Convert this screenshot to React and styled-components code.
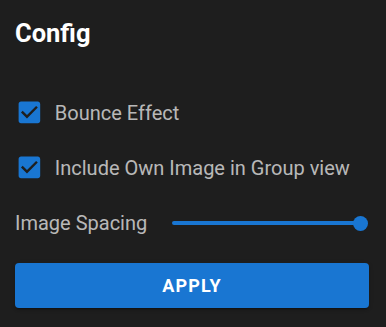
import React from "react";
import styled, { createGlobalStyle } from "styled-components";

const Global = createGlobalStyle`
  html, body { margin: 0; padding: 0; background: #1e1e1e; }
  body { font-family: Roboto, "Liberation Sans", sans-serif; }
`;

const Panel = styled.div`
  width: 386px;
  height: 327px;
  box-sizing: border-box;
  padding: 17px 17px 0 15px;
  background: #1e1e1e;
  display: flex;
  flex-direction: column;
`;

const Title = styled.h2`
  margin: 0 0 36px 0;
  height: 32px;
  line-height: 32px;
  font-size: 25.5px;
  font-weight: 700;
  color: #ffffff;
`;

const Row = styled.label`
  display: flex;
  align-items: center;
  height: ${(p) => p.$h || 55}px;
  gap: ${(p) => p.$gap || 11}px;
`;

const Label = styled.span`
  font-size: 20px;
  line-height: 24px;
  color: rgba(255, 255, 255, 0.7);
  white-space: nowrap;
`;

const Box = styled.svg`
  width: 28.8px;
  height: 28.8px;
  flex: none;
  fill: #1976d2;
`;

const SliderWrap = styled.div`
  position: relative;
  width: 188px;
  height: 16px;
  margin-left: auto;
  margin-right: 9px;
`;

const Track = styled.div`
  position: absolute;
  left: 0;
  right: 0;
  top: 6px;
  height: 4px;
  border-radius: 2px;
  background: #1976d2;
`;

const Thumb = styled.div`
  position: absolute;
  top: 0.5px;
  width: 15px;
  height: 15px;
  margin-left: -7.5px;
  border-radius: 50%;
  background: #1976d2;
`;

const Button = styled.button`
  margin-top: 12px;
  height: 45px;
  width: 100%;
  border: none;
  border-radius: 4px;
  background: #1976d2;
  color: #fff;
  font-family: Roboto, "Liberation Sans", sans-serif;
  font-size: 18px;
  font-weight: 700;
  letter-spacing: 1.1px;
  text-transform: uppercase;
  box-shadow: 0 3px 1px -2px rgba(0,0,0,0.2), 0 2px 2px 0 rgba(0,0,0,0.14), 0 1px 5px 0 rgba(0,0,0,0.12);
  cursor: pointer;
`;

const CheckIcon = () => (
  <Box viewBox="0 0 24 24">
    <path d="M19 3H5c-1.11 0-2 .9-2 2v14c0 1.1.89 2 2 2h14c1.11 0 2-.9 2-2V5c0-1.1-.89-2-2-2zm-9 14l-5-5 1.41-1.41L10 14.17l7.59-7.59L19 8l-9 9z" />
  </Box>
);

export default function App() {
  const value = 100;
  return (
    <>
      <Global />
      <Panel>
        <Title>Config</Title>
        <Row>
          <CheckIcon />
          <Label>Bounce Effect</Label>
        </Row>
        <Row>
          <CheckIcon />
          <Label>Include Own Image in Group view</Label>
        </Row>
        <Row as="div" $h={56} $gap={0}>
          <Label>Image Spacing</Label>
          <SliderWrap>
            <Track style={{ right: `${100 - value}%` }} />
            <Thumb style={{ left: `${value}%` }} />
          </SliderWrap>
        </Row>
        <Button>Apply</Button>
      </Panel>
    </>
  );
}
